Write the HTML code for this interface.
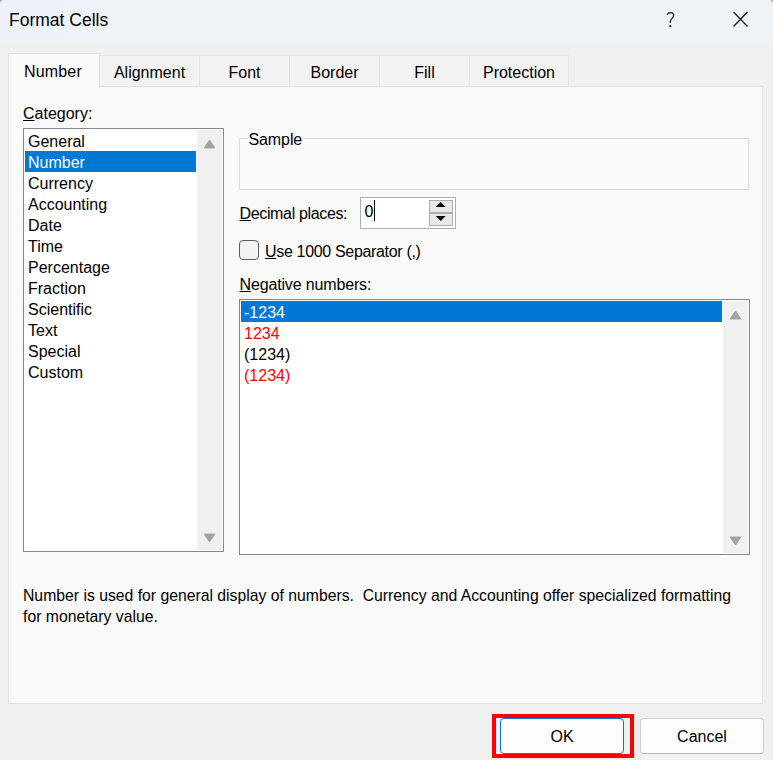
<!DOCTYPE html>
<html><head><meta charset="utf-8">
<style>
*{box-sizing:border-box;margin:0;padding:0}
html,body{width:773px;height:760px;overflow:hidden;background:#f0f0f0}
body{position:relative;font-family:"Liberation Sans",sans-serif;font-size:16px;color:#000}
.a{position:absolute}
.t{position:absolute;white-space:pre;line-height:20px;font-size:16px}
#title{left:0;top:0;width:773px;height:42px;background:linear-gradient(90deg,#edf2fa 0,#eef3f8 110px,#eef3f8 100%)}
.tab{position:absolute;top:55px;height:31px;background:#f2f2f2;border:1px solid #e3e3e3;border-bottom:none}
.tab .t{left:0;right:0;text-align:center;top:7px}
#panel{left:8px;top:86px;width:755px;height:618px;background:#f9f9f9;border:1px solid #e3e3e3}
.lb{position:absolute;background:#fff;border:1px solid #828790}
.sb{position:absolute;background:#f0f0f0}
.sel{position:absolute;background:#0078d4}
.u{text-decoration:underline;text-underline-offset:1px}
.btn{position:absolute;top:718px;width:124px;height:36px;background:#fdfdfd;border-radius:4px}
</style></head><body>
<div id="title" class="a"></div>
<div class="t" style="left:9px;top:10px;font-size:17.5px">Format Cells</div>
<svg class="a" style="left:0;top:0" width="8" height="8" viewBox="0 0 8 8"><path d="M0 0 L4 0 A4 4 0 0 0 0 3.5 Z" fill="#a9a9a9"/></svg>
<svg class="a" style="left:765px;top:0" width="8" height="8" viewBox="0 0 8 8"><path d="M8 0 L4 0 A4 4 0 0 1 8 3.5 Z" fill="#a9a9a9"/></svg>

<svg class="a" style="left:660px;top:8px" width="22" height="24" viewBox="0 0 22 24">
<path d="M7.3 6.9 C7.5 5.4 8.8 4.6 10.5 4.6 C12.4 4.6 13.7 5.8 13.7 7.6 C13.7 10 10.3 10.9 10.3 13.6 L10.3 15.1" fill="none" stroke="#1a1a1a" stroke-width="1.25"/>
<rect x="9.3" y="17.2" width="1.9" height="1.9" fill="#1a1a1a"/>
</svg>
<svg class="a" style="left:728px;top:7px" width="25" height="25" viewBox="0 0 25 25">
<path d="M5.5 5 L19.5 19.5 M19.5 5 L5.5 19.5" stroke="#1a1a1a" stroke-width="1.3" fill="none"/>
</svg>

<!-- panel -->
<div id="panel" class="a"></div>
<!-- tabs -->
<div class="tab" style="left:99px;width:101px"><div class="t">Alignment</div></div>
<div class="tab" style="left:199px;width:91px"><div class="t">Font</div></div>
<div class="tab" style="left:289px;width:91px"><div class="t">Border</div></div>
<div class="tab" style="left:379px;width:91px"><div class="t">Fill</div></div>
<div class="tab" style="left:469px;width:100px"><div class="t">Protection</div></div>
<div class="a" style="left:8px;top:53px;width:92px;height:35px;background:#f9f9f9;border:1px solid #e3e3e3;border-bottom:none"></div>
<div class="t" style="left:7px;width:92px;text-align:center;top:62px;letter-spacing:0.15px">Number</div>

<div class="t" style="left:23px;top:104px"><span class="u">C</span>ategory:</div>
<!-- category listbox -->
<div class="lb" style="left:23px;top:128px;width:201px;height:424px"></div>
<div class="sb" style="left:197px;top:130px;width:25px;height:420px"></div>
<svg class="a" style="left:203px;top:139px" width="13" height="11" viewBox="0 0 13 11"><path d="M6.5 1.8 L11.3 8.7 L1.7 8.7 Z" fill="#a3a3a3" stroke="#a3a3a3" stroke-width="1.6" stroke-linejoin="round"/></svg>
<svg class="a" style="left:203px;top:532px" width="13" height="11" viewBox="0 0 13 11"><path d="M6.5 9.2 L11.3 2.3 L1.7 2.3 Z" fill="#a3a3a3" stroke="#a3a3a3" stroke-width="1.6" stroke-linejoin="round"/></svg>
<div class="sel" style="left:25px;top:151px;width:171px;height:21px"></div>
<div class="t" style="left:28px;top:132px">General</div>
<div class="t" style="left:28px;top:153px;color:#fff">Number</div>
<div class="t" style="left:28px;top:174px">Currency</div>
<div class="t" style="left:28px;top:195px">Accounting</div>
<div class="t" style="left:28px;top:216px">Date</div>
<div class="t" style="left:28px;top:237px">Time</div>
<div class="t" style="left:28px;top:258px">Percentage</div>
<div class="t" style="left:28px;top:279px">Fraction</div>
<div class="t" style="left:28px;top:300px">Scientific</div>
<div class="t" style="left:28px;top:321px">Text</div>
<div class="t" style="left:28px;top:342px">Special</div>
<div class="t" style="left:28px;top:363px">Custom</div>

<!-- sample group -->
<div class="a" style="left:239px;top:138px;width:510px;height:52px;border:1px solid #dcdcdc"></div>
<div class="a" style="left:249px;top:134px;width:54px;height:8px;background:#f9f9f9"></div>
<div class="t" style="left:248.5px;top:130px;letter-spacing:-0.1px">Sample</div>

<div class="t" style="left:239.5px;top:204px;letter-spacing:-0.35px"><span class="u">D</span>ecimal places:</div>
<div class="a" style="left:360px;top:197px;width:96px;height:32px;background:#fff;border:1px solid #abadb3"></div>
<div class="t" style="left:364.5px;top:202px">0</div>
<div class="a" style="left:374px;top:200px;width:1px;height:21px;background:#000"></div>
<div class="a" style="left:429px;top:200px;width:24px;height:13px;background:#e8e8e8;border:1px solid #acacac"></div>
<div class="a" style="left:429px;top:213px;width:24px;height:13px;background:#e8e8e8;border:1px solid #acacac"></div>
<svg class="a" style="left:435px;top:201px" width="12" height="7" viewBox="0 0 12 7"><path d="M0.8 6 L5.7 1 L10.6 6 Z" fill="#000"/></svg>
<svg class="a" style="left:435px;top:215px" width="12" height="7" viewBox="0 0 12 7"><path d="M0.8 1 L10.6 1 L5.7 6 Z" fill="#000"/></svg>

<div class="a" style="left:239px;top:240px;width:20px;height:20px;background:#f3f3f3;border:1px solid #5d5d5d;border-radius:4px"></div>
<div class="t" style="left:265px;top:242px;letter-spacing:-0.33px"><span class="u">U</span>se 1000 Separator (,)</div>

<div class="t" style="left:239.5px;top:275px;letter-spacing:-0.15px"><span class="u">N</span>egative numbers:</div>
<div class="lb" style="left:239px;top:299px;width:511px;height:256px"></div>
<div class="sb" style="left:723px;top:301px;width:25px;height:252px"></div>
<svg class="a" style="left:729px;top:310px" width="13" height="11" viewBox="0 0 13 11"><path d="M6.5 1.8 L11.3 8.7 L1.7 8.7 Z" fill="#a3a3a3" stroke="#a3a3a3" stroke-width="1.6" stroke-linejoin="round"/></svg>
<svg class="a" style="left:729px;top:535px" width="13" height="11" viewBox="0 0 13 11"><path d="M6.5 9.2 L11.3 2.3 L1.7 2.3 Z" fill="#a3a3a3" stroke="#a3a3a3" stroke-width="1.6" stroke-linejoin="round"/></svg>
<div class="sel" style="left:241px;top:301px;width:481px;height:21px"></div>
<div class="t" style="left:244px;top:303px;color:#fff">-1234</div>
<div class="t" style="left:244px;top:324px;color:#ff0000">1234</div>
<div class="t" style="left:244px;top:345px">(1234)</div>
<div class="t" style="left:244px;top:366px;color:#ff0000">(1234)</div>

<div class="t" style="left:23px;top:586px;font-size:15.75px">Number is used for general display of numbers.  Currency and Accounting offer specialized formatting</div>
<div class="t" style="left:23px;top:607px;font-size:15.75px">for monetary value.</div>

<!-- buttons -->
<div class="btn" style="left:500px;border:1px solid #0078d4"><div class="t" style="left:0;right:0;text-align:center;top:8px">OK</div></div>
<div class="btn" style="left:640px;border:1px solid #d0d0d0;border-bottom-color:#b8b8b8"><div class="t" style="left:0;right:0;text-align:center;top:8px">Cancel</div></div>
<div class="a" style="left:492px;top:714px;width:142px;height:44px;border:4px solid #ff0000"></div>
</body></html>
